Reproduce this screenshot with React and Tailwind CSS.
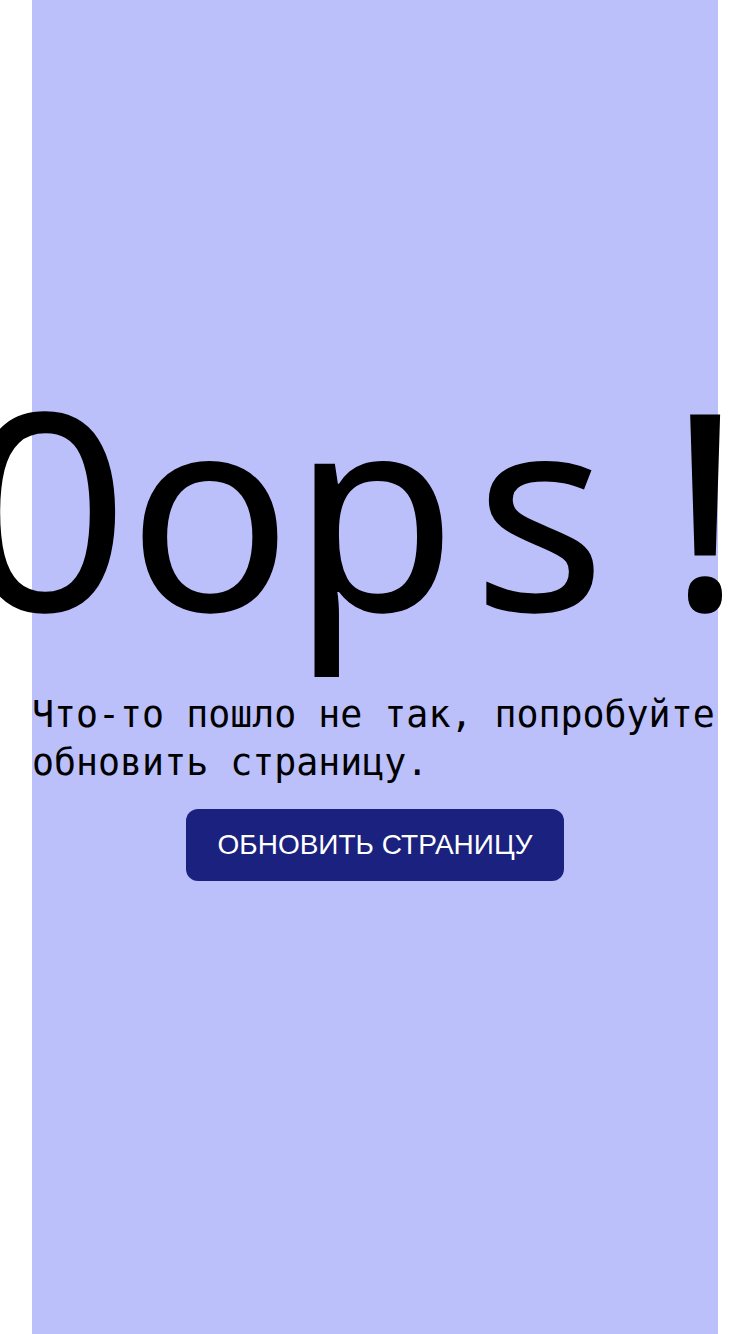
export default function App() {
  return (
    <div className="flex min-h-screen w-full justify-center bg-white">
      <div className="flex min-h-[1334px] w-[686px] flex-col items-center bg-[#bbbffa] pt-[367px]">
        <h1 className="whitespace-nowrap text-[275px] font-normal leading-none text-black [font-family:'Noto_Sans_Mono','DejaVu_Sans_Mono',monospace]">
          Oops!
        </h1>
        <p className="mt-[49px] w-full text-left text-[36.6px] leading-[48px] text-black [font-family:'DejaVu_Sans_Mono',monospace]">
          Что-то пошло не так, попробуйте обновить страницу.
        </p>
        <button className="mt-[22px] rounded-[12px] bg-[#1b217e] px-[32px] py-[18px] text-[28px] leading-[36px] text-white [font-family:'Liberation_Sans',Arial,sans-serif]">
          ОБНОВИТЬ СТРАНИЦУ
        </button>
      </div>
    </div>
  );
}
